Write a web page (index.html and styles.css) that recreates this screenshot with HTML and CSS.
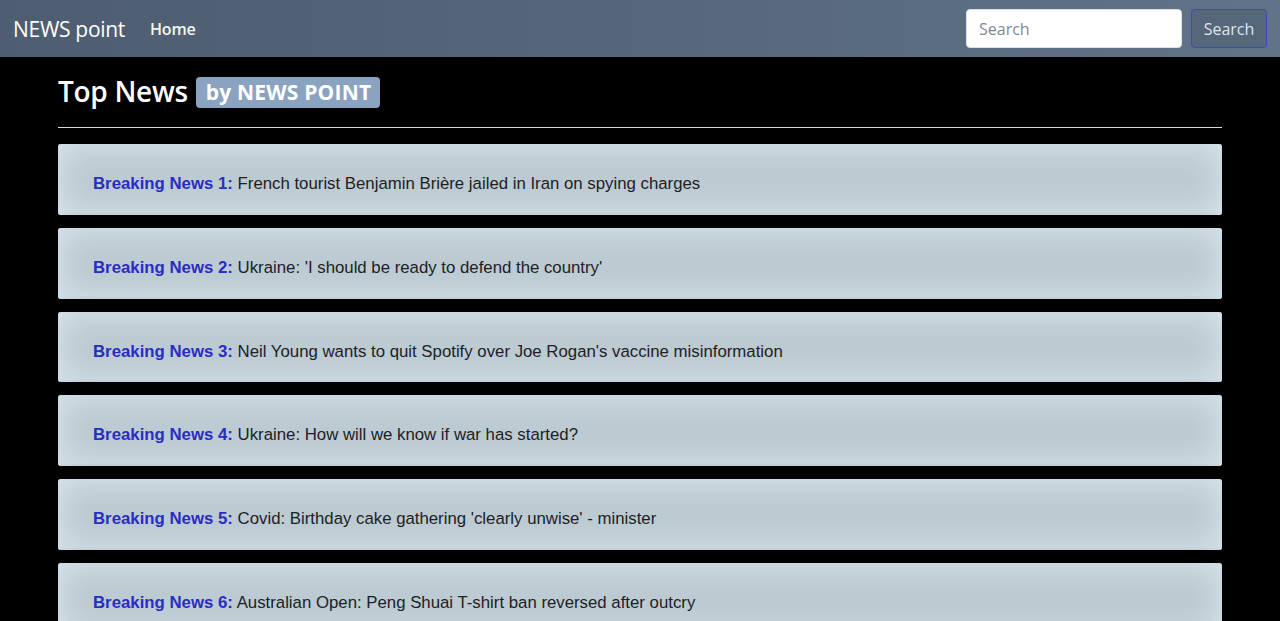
FILE: index.html
```html
<!DOCTYPE html>
<html lang="en">
<head>
<meta charset="utf-8">
<title>NEWS point</title>
<link rel="stylesheet" href="styles.css">
</head>
<body>
<nav class="navbar">
  <div class="nav-left">
    <a class="brand" href="#">NEWS point</a>
    <a class="nav-link" href="#">Home</a>
  </div>
  <form class="search">
    <input class="search-input" type="search" placeholder="Search">
    <button class="search-btn" type="button">Search</button>
  </form>
</nav>
<main class="container">
  <h1 class="title">Top News <span class="badge">by NEWS POINT</span></h1>
  <hr class="rule">
  <div class="list">
    <div class="card"><span class="label">Breaking News 1:</span> French tourist Benjamin Brière jailed in Iran on spying charges</div>
    <div class="card"><span class="label">Breaking News 2:</span> Ukraine: 'I should be ready to defend the country'</div>
    <div class="card"><span class="label">Breaking News 3:</span> Neil Young wants to quit Spotify over Joe Rogan's vaccine misinformation</div>
    <div class="card"><span class="label">Breaking News 4:</span> Ukraine: How will we know if war has started?</div>
    <div class="card"><span class="label">Breaking News 5:</span> Covid: Birthday cake gathering 'clearly unwise' - minister</div>
    <div class="card"><span class="label">Breaking News 6:</span> Australian Open: Peng Shuai T-shirt ban reversed after outcry</div>
  </div>
</main>
</body>
</html>
```
FILE: styles.css
```css
* { box-sizing: border-box; }
html, body { margin: 0; padding: 0; }
body {
  background: #000;
  font-family: "Open Sans", "Noto Sans", sans-serif;
  overflow: hidden;
}
.navbar {
  height: 57px;
  display: flex;
  align-items: center;
  justify-content: space-between;
  padding: 0 13px 0 13px;
  background: linear-gradient(90deg, #4e5d70 0%, #56677c 50%, #607389 100%);
}
.nav-left { display: flex; align-items: center; }
.brand {
  color: #fff;
  text-decoration: none;
  font-size: 21px;
  letter-spacing: -0.3px;
  margin-right: 25px;
}
.nav-link {
  color: #f4f6ea;
  text-decoration: none;
  font-size: 16px;
  font-weight: 600;
  letter-spacing: -0.2px;
}
.search { display: flex; align-items: center; gap: 9px; }
.search-input {
  width: 216px;
  height: 39px;
  border: 1px solid #dde2e6;
  border-radius: 4px;
  padding: 0 12px;
  font-family: inherit;
  font-size: 16px;
  color: #333;
  background: #fff;
  outline: none;
}
.search-input::placeholder { color: #7d8a96; }
.search-btn {
  width: 76px;
  height: 39px;
  border: 1px solid #3b47c8;
  border-radius: 4px;
  background: #56667b;
  color: #dfe5ea;
  font-family: inherit;
  font-size: 16px;
  padding: 0;
}
.container {
  margin: 0 58px;
}
.title {
  margin: 0;
  padding-top: 17px;
  display: flex;
  align-items: center;
  color: #fff;
  font-size: 28px;
  font-weight: 600;
  line-height: 34px;
  letter-spacing: -0.3px;
}
.badge {
  display: inline-block;
  margin-left: 8px;
  margin-top: 2px;
  background: #8aa3c0;
  color: #fff;
  border-radius: 4px;
  font-size: 21px;
  font-weight: 700;
  line-height: 31px;
  padding: 0 9px 0 10px;
  letter-spacing: 0.2px;
}
.rule {
  margin: 19px 0 16px;
  border: 0;
  border-top: 1px solid #d8d8d8;
}
.list { display: flex; flex-direction: column; gap: 13px; }
.card {
  height: 70.8px;
  padding: 30px 36px 0 35px;
  border-radius: 3px;
  background: #bccad2;
  box-shadow: inset 0 0 30px 2px #d9e6ee, inset 0 -2px 2px #aab6bd;
  font-family: "Liberation Sans", Arial, sans-serif;
  font-size: 16.8px;
  line-height: 19px;
  color: #1e2124;
}
.label { color: #2a2dc2; font-weight: 700; }
```
